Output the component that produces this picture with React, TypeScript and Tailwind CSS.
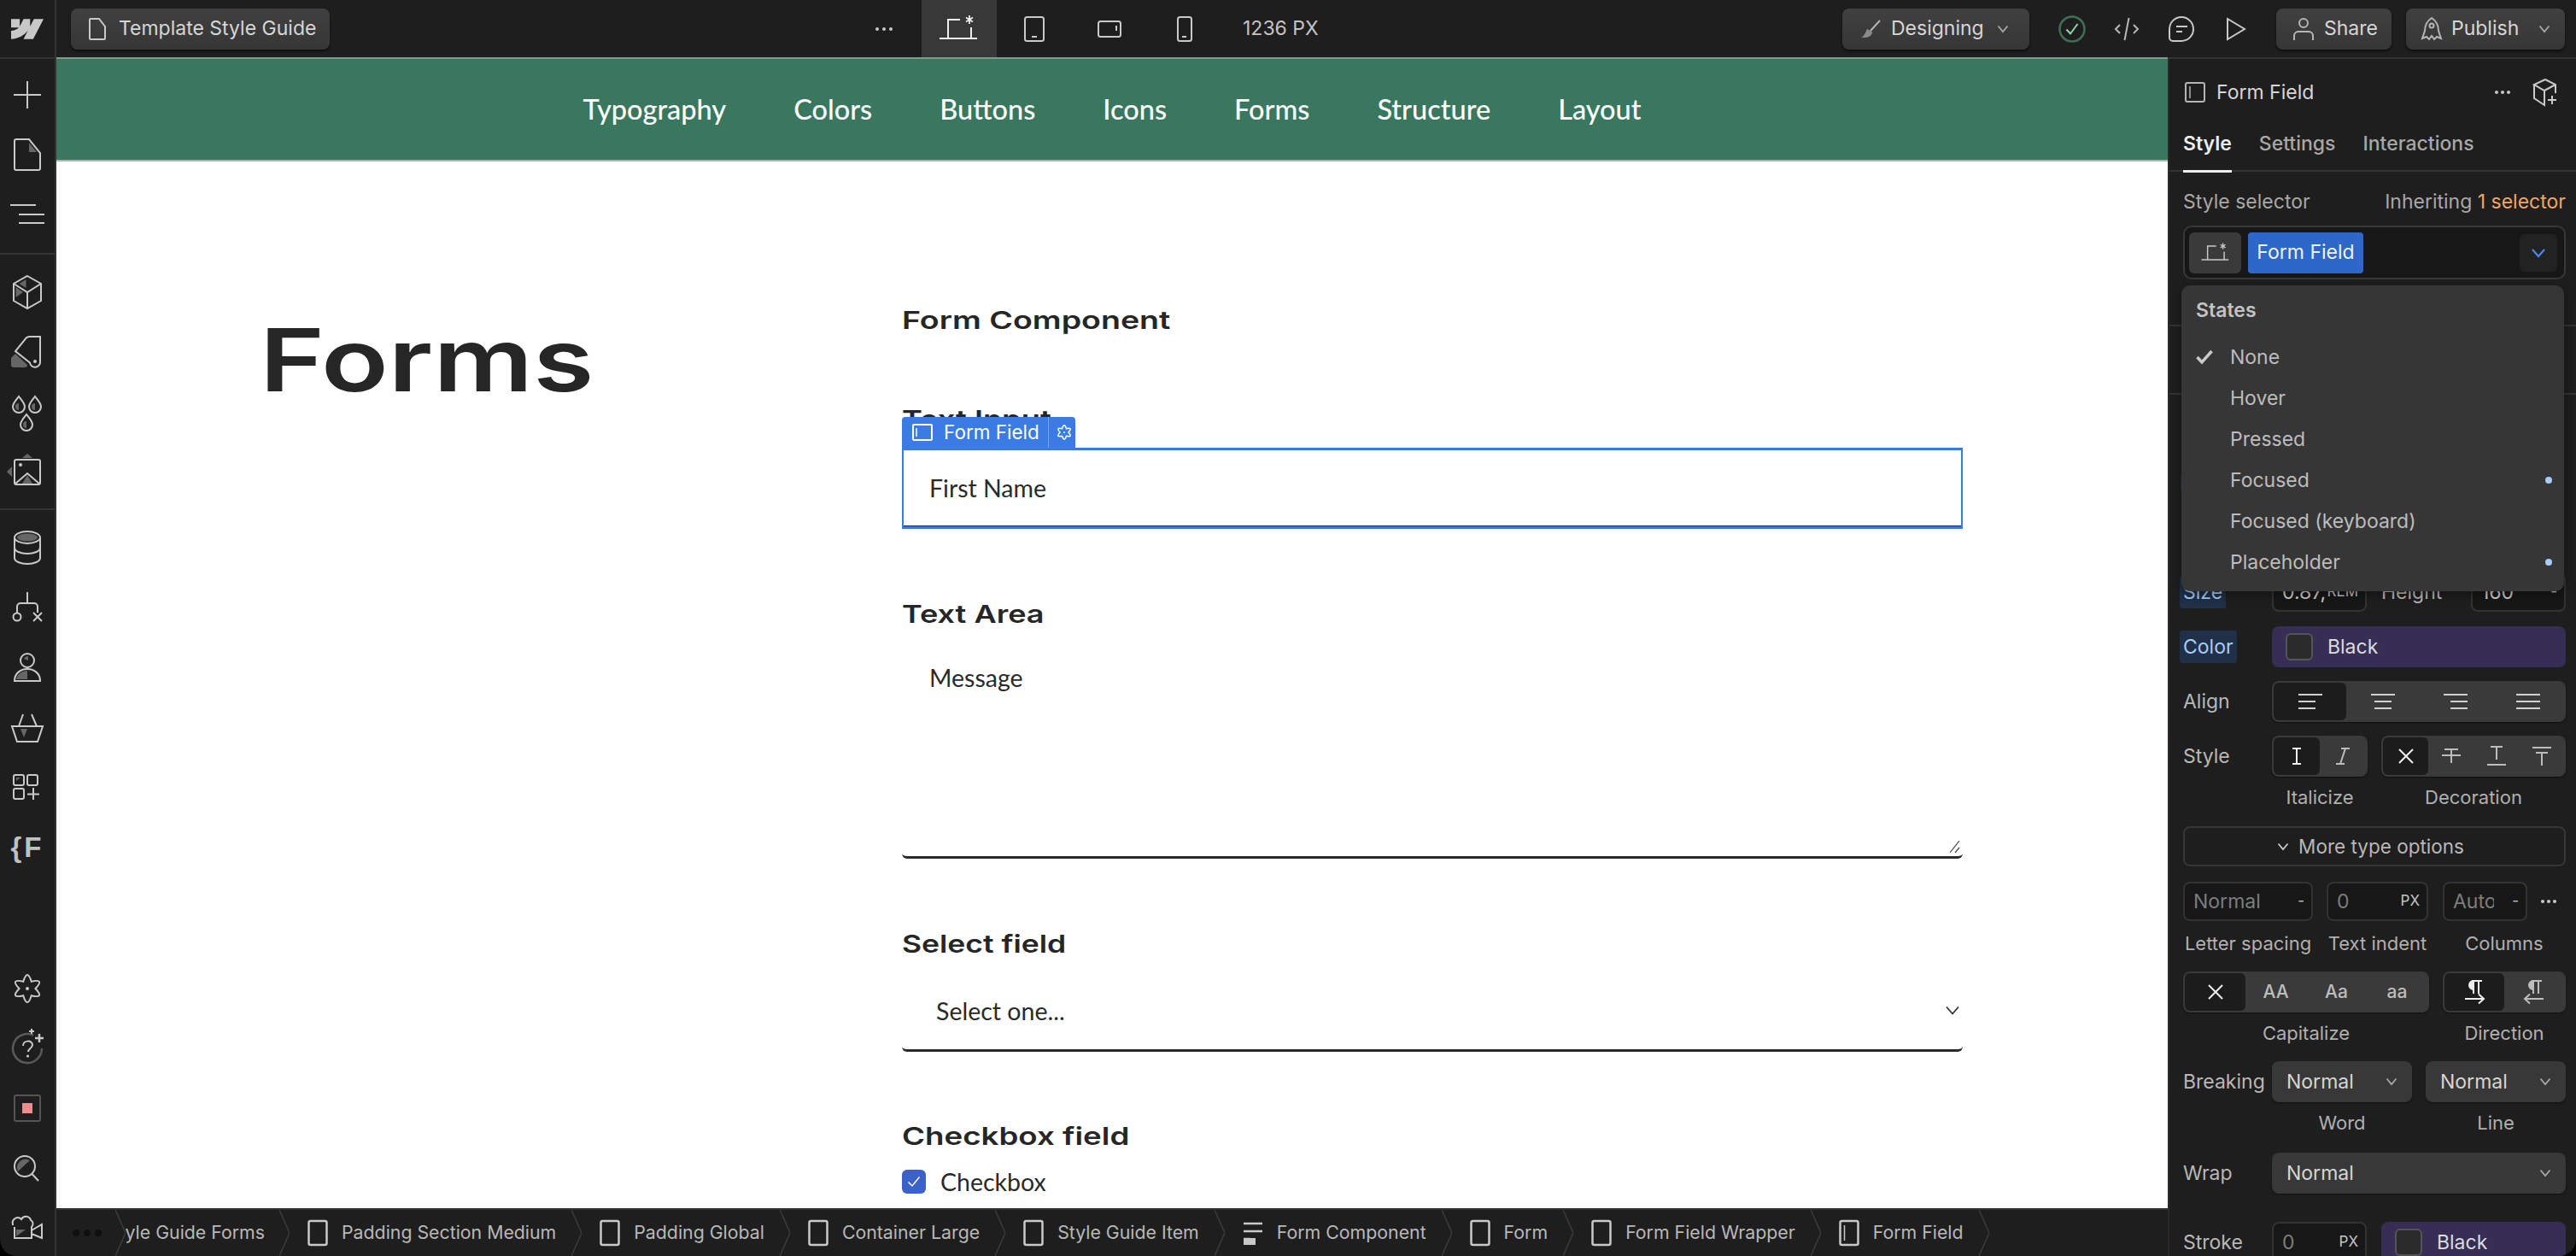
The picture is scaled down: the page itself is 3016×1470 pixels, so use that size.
import React from 'react';

const C = '#c9c9c9';
const A = '#666666';

function flower(c: number, R: number, r: number) {
  const pt = (deg: number, rad: number) => {
    const a = (deg * Math.PI) / 180;
    return `${(c + rad * Math.cos(a)).toFixed(2)} ${(c + rad * Math.sin(a)).toFixed(2)}`;
  };
  let d = `M${pt(-60, r)}`;
  for (let i = 0; i < 6; i++) {
    const a = -30 + i * 60;
    d += ` Q${pt(a, R)} ${pt(a + 30, r)}`;
  }
  return d + 'Z';
}

const Icon: React.FC<{ s?: number; h?: number; vb?: string; w?: number; c?: string; children: React.ReactNode }> = ({ s = 40, h, vb, w = 2, c = C, children }) => (
  <svg width={s} height={h ?? s} viewBox={vb ?? `0 0 ${s} ${h ?? s}`} fill="none" stroke={c} strokeWidth={w} className="block shrink-0 overflow-visible">
    {children}
  </svg>
);

const Drop = ({ x, y }: { x: number; y: number }) => (
  <g transform={`translate(${x} ${y})`}>
    <path d="M0 -10C3 -6 7 -2 7 2a7 7 0 0 1-14 0C-7 -2 -3 -6 0 -10Z" />
    <path d="M0 -2a4 4 0 0 0 0 8Z" fill={A} stroke="none" />
  </g>
);

const BoxIcon = ({ kind = 'plain', c = C }: { kind?: 'plain' | 'field'; c?: string }) => (
  <Icon s={24} h={32} vb="0 0 24 32" w={2.5} c={c}>
    <rect x="1.5" y="2" width="21" height="28" rx="2" />
    {kind === 'field' && <path d="M6.5 7v18" strokeWidth="1.5" />}
  </Icon>
);

const railTop = [
  <Icon key="a"><path d="M20 4v32M4 20h32" /></Icon>,
  <Icon key="b">
    <path d="M7 2h15l13 16v18a2 2 0 0 1-2 2H7a2 2 0 0 1-2-2V4a2 2 0 0 1 2-2Z" />
    <path d="M22 6v11h9Z" fill={A} stroke="none" />
  </Icon>,
  <Icon key="c"><path d="M0 9h30M10 20h30M10 30h30" /></Icon>,
];

const railDesign = [
  <Icon key="a">
    <path d="M20 1l16 9v20l-16 9-16-9V10ZM4 10l16 10 16-10M20 20v19" />
    <path d="M18.500 5l-8 5 8 5ZM6.500 14v12l8.500-6Z" fill={A} stroke="none" />
  </Icon>,
  <Icon key="b">
    <path d="M22 2h13v29a6 6 0 0 1-12 1.500L6 19 19 3Z" />
    <circle cx="29" cy="31" r="2" fill={C} stroke="none" />
    <path d="M1 35v-8l5-5 14 13a3 3 0 0 1-3 3H4a3 3 0 0 1-3-3Z" fill={A} stroke="none" />
  </Icon>,
  <Icon key="c"><Drop x={10} y={12} /><Drop x={29} y={12} /><Drop x={19} y={33} /></Icon>,
  <Icon key="d">
    <rect x="5" y="6" width="30" height="29" rx="2" />
    <path d="M6 34l14-12 14 12" />
    <circle cx="12" cy="12" r="2" fill={C} stroke="none" />
    <path d="M14 4l6-5 6 5ZM2 14l-6 6 6 6ZM20 24l-6 10h12Z" fill={A} stroke="none" />
  </Icon>,
];

const railCms = [
  <Icon key="a">
    <ellipse cx="20" cy="8" rx="15" ry="7" />
    <path d="M5 8v24c0 4 7 7 15 7s15-3 15-7V8M5 20c0 4 7 7 15 7s15-3 15-7" />
    <ellipse cx="20" cy="8" rx="12" ry="4.500" fill={A} stroke="none" />
  </Icon>,
  <Icon key="b">
    <path d="M20 2v13M8 26v-7a4 4 0 0 1 4-4h16a4 4 0 0 1 4 4v7" />
    <circle cx="8" cy="31" r="4.500" />
    <path d="M27 26l10 10M37 26L27 36" />
  </Icon>,
  <Icon key="c">
    <circle cx="20" cy="12" r="8" />
    <path d="M5 36c0-9 7-14 15-14s15 5 15 14Z" />
    <path d="M7 34c1-6 7-10 13-10v10ZM16 10c1-2 3-3 5-3v5Z" fill={A} stroke="none" />
  </Icon>,
  <Icon key="d">
    <path d="M2 19h36l-6 18H8ZM15 5l-5 14M25 5l6 14" />
    <path d="M12 22h8l-4 10Z" fill={A} stroke="none" />
  </Icon>,
  <Icon key="e">
    <rect x="4" y="6" width="12" height="12" rx="2" />
    <rect x="20" y="6" width="12" height="12" rx="2" />
    <rect x="4" y="22" width="12" height="12" rx="2" />
    <path d="M20 28.500h14M27 21v14" />
    <path d="M7 9h5l-5 4Z" fill={A} stroke="none" />
  </Icon>,
  <span key="f" className="font-['Liberation_Sans',sans-serif] font-bold text-[33px] leading-none text-[#c0c0c0] tracking-[3px]">{'{F'}</span>,
];

const railBottom = [
  <Icon key="a">
    <path d={flower(20, 24, 9.500)} />
    <circle cx="20" cy="20" r="2" fill={C} stroke="none" />
  </Icon>,
  <div key="b" className="relative">
    <Icon>
      <path d="M27 4.500A17 17 0 1 0 37 20" stroke="#5a5a5a" strokeWidth="2.500" />
      <path d="M34 3v10M29 8h10" strokeWidth="2.500" />
      <path d="M25 -3v6M22 0h6" strokeWidth="2" />
      <path d="M15 17c0-7 11-7 11-1 0 4-5 4-5 8" />
      <circle cx="20.500" cy="29" r="1.600" fill={C} stroke="none" />
    </Icon>
  </div>,
  <div key="c" className="w-[32px] h-[32px] border-[2.500px] border-[#555] rounded-[3px] flex items-center justify-center">
    <div className="w-[12px] h-[12px] bg-[#f28b8b]" />
  </div>,
  <Icon key="d">
    <circle cx="17" cy="18" r="12" />
    <path d="M25.500 27L33 35" />
    <path d="M9 24a10 10 0 0 1 14-13Z" fill={A} stroke="none" />
  </Icon>,
  <Icon key="e">
    <path d="M3 17a6 6 0 0 1 0-1 6 6 0 0 1 10-6 6 6 0 0 1 11 1 5 5 0 0 1 1 8h0v13H5V19M25 23l12-7v16l-12-5" />
    <path d="M7 30V22h11Z" fill={A} stroke="none" />
  </Icon>,
];

const RailRow: React.FC<{ children: React.ReactNode }> = ({ children }) => (
  <div className="h-[70px] flex items-center justify-center">{children}</div>
);

const Rail = () => (
  <div className="w-[66px] shrink-0 flex flex-col border-r-2 border-t-2 border-[#333333]">
    <div className="pt-[7px] pb-[10px] border-b-2 border-[#333333]">{railTop.map((x, i) => <RailRow key={i}>{x}</RailRow>)}</div>
    <div className="pt-[9px] pb-[8px] border-b-2 border-[#333333]">{railDesign.map((x, i) => <RailRow key={i}>{x}</RailRow>)}</div>
    <div className="pt-[9px]">{railCms.map((x, i) => <RailRow key={i}>{x}</RailRow>)}</div>
    <div className="mt-auto -mb-[2px]">{railBottom.map((x, i) => <RailRow key={i}>{x}</RailRow>)}</div>
  </div>
);

const TopBtn: React.FC<{ className: string; children: React.ReactNode }> = ({ className, children }) => (
  <div className={`h-[48px] rounded-[8px] bg-linear-to-b from-[#404040] to-[#363636] shadow-[0_2px_3px_rgba(0,0,0,0.6)] flex items-center text-[#d6d6d6] ${className}`}>
    {children}
  </div>
);

const SmallChevron = ({ c = '#a8a8a8' }: { c?: string }) => (
  <Icon s={14} h={10} c={c} w={1.800}><path d="M1.500 1.500L7 8l5.500-6.500" /></Icon>
);

const LaptopIcon = ({ c = C }: { c?: string }) => (
  <Icon s={46} h={32} c={c}>
    <path d="M0 27h44M10 27V5h14M37 14v13" />
    <path d="M35 0v10M31 2.500l8 5M39 2.500l-8 5" strokeWidth="1.800" />
  </Icon>
);

const TopBar = () => (
  <div className="h-[67px] shrink-0 flex items-center">
    <div className="w-[991px] h-full flex items-center shrink-0">
      <div className="w-[66px] h-full border-r-2 border-[#333333] flex items-center justify-center">
        <svg width="38" height="38" viewBox="0 0 24 24" fill="#c8c8c8" className="block"><path d="M24 4.515l-7.658 14.97H9.149l3.205-6.204h-.144C9.566 16.713 5.621 18.973 0 19.485v-6.118s3.596-.213 5.71-2.435H0V4.515h6.417v5.278l.144-.001 2.622-5.277h4.854v5.244h.144l2.72-5.244H24z" /></svg>
      </div>
      <TopBtn className="ml-[17px] w-[303px] pl-[21px] gap-[15px]">
        <Icon s={20} h={26}><path d="M2 1h10l7 9v14a1 1 0 0 1-1 1H2a1 1 0 0 1-1-1V2a1 1 0 0 1 1-1Z" /></Icon>
        Template Style Guide
      </TopBtn>
    </div>
    <div className="w-[88px] h-full flex items-center justify-center text-[#c9c9c9]">
      <Icon s={22} h={6} c="none" w={0}><circle cx="3" cy="3" r="2" fill={C} /><circle cx="11" cy="3" r="2" fill={C} /><circle cx="19" cy="3" r="2" fill={C} /></Icon>
    </div>
    <div className="w-[88px] h-full bg-[#383838] flex items-center justify-center"><LaptopIcon c="#eeeeee" /></div>
    <div className="w-[88px] h-full flex items-center justify-center">
      <Icon s={24} h={30}><rect x="1" y="1" width="22" height="28" rx="2.500" /><path d="M9 24h6" /></Icon>
    </div>
    <div className="w-[88px] h-full flex items-center justify-center">
      <Icon s={28} h={20}><rect x="1" y="1" width="26" height="18" rx="2.500" /><path d="M22 6v6" /></Icon>
    </div>
    <div className="w-[88px] h-full flex items-center justify-center">
      <Icon s={18} h={30}><rect x="1" y="1" width="16" height="28" rx="2.500" /><path d="M6 24h5" /></Icon>
    </div>
    <div className="ml-[24px] text-[#c4c4c4]">1236 PX</div>
    <div className="ml-auto mr-[13px] h-full flex items-center">
      <TopBtn className="w-[219px] pl-[21px]">
        <svg width="24" height="22" viewBox="0 0 24 22" className="block shrink-0 mr-[12px]">
          <path d="M23 1L12 13" stroke="#b5b5b5" strokeWidth="2" />
          <path d="M8 11l6 3c0 4-3 7-9 7H1c4-2 5-6 7-10Z" fill="#8a8a8a" />
        </svg>
        Designing
        <span className="ml-[15px]"><SmallChevron /></span>
      </TopBtn>
      <div className="ml-[18px] w-[64px] flex justify-center">
        <Icon s={32} c="#3f6f54" w={2.500}><circle cx="16" cy="16" r="14.500" /><path d="M9.500 16.500l4.500 5L22.500 10" stroke="#8ad8a4" strokeWidth="2" /></Icon>
      </div>
      <div className="w-[64px] flex justify-center">
        <Icon s={28} h={30} c="#b8b8b8"><path d="M6 10l-5 5 5 5M22 10l5 5-5 5M16.500 2l-5 26" /></Icon>
      </div>
      <div className="w-[64px] flex justify-center">
        <Icon s={30}><path d="M15 1a14 14 0 0 1 0 28H5a4 4 0 0 1-4-4V15A14 14 0 0 1 15 1Z" /><path d="M9 12h13M9 18h7" /></Icon>
      </div>
      <div className="w-[64px] flex justify-center">
        <Icon s={24} h={28}><path d="M2 2l20 12L2 26Z" /></Icon>
      </div>
      <TopBtn className="ml-[15px] w-[135px] pl-[20px] gap-[12px]">
        <Icon s={24} h={28} c="#b5b5b5"><circle cx="12" cy="7" r="5" /><path d="M1 27v-5a5 5 0 0 1 5-5h12a5 5 0 0 1 5 5v5" /></Icon>
        Share
      </TopBtn>
      <TopBtn className="ml-[17px] w-[186px] pl-[18px] gap-[11px]">
        <Icon s={24} h={28} c="#b5b5b5"><path d="M12 1c6 4 8 10 8 15l3 9-5-2-3 3-3-4-3 4-3-3-5 2 3-9c0-5 2-11 8-15Z" /><circle cx="12" cy="10" r="2.500" /></Icon>
        Publish
        <span className="ml-[12px]"><SmallChevron /></span>
      </TopBtn>
    </div>
  </div>
);

const heading = "font-['Inter',sans-serif] font-semibold text-[29px] leading-[36px] text-[#262626] origin-left";
const pageText = "font-['Lato',sans-serif] text-[#2a2a2a]";

const Canvas = () => (
  <div className="flex-1 min-h-0 bg-white overflow-hidden flex flex-col">
    <nav className="h-[122px] shrink-0 bg-[#39785f] border-t-2 border-t-[#7d9d90] border-b-2 border-b-[#a9b5af] flex items-center justify-center gap-[79px] font-['Lato',sans-serif] font-medium text-[32.500px] text-white">
      {['Typography', 'Colors', 'Buttons', 'Icons', 'Forms', 'Structure', 'Layout'].map((t) => <span key={t}>{t}</span>)}
    </nav>
    <div className="flex pl-[242px] pt-[168px]">
      <h1 className="w-[748px] -ml-[4px] mr-[4px] mt-[4px] font-['Inter',sans-serif] font-semibold text-[102px] leading-[120px] text-[#262626]">
        <span className="inline-block origin-left scale-x-[1.27]">Forms</span>
      </h1>
      <div className="w-[1242px]">
        <div className={`${heading} scale-x-[1.295]`}>Form Component</div>
        <div className={`${heading} scale-x-[1.25] mt-[80px]`}>Text Input</div>
        <div className={`${pageText} relative mt-[15px] h-[95px] border-2 border-[#3a7be0] border-t-[3px] border-b-[3px] pl-[30px] flex items-center text-[28.500px] text-[#2a2a2a] shadow-[inset_0_-1px_0_#1f2a3d]`}>
          First Name
          <div className="absolute left-[-2px] top-[-39px] h-[36px] w-[203px] bg-[#3b7ce4] rounded-t-[4px] flex items-center pl-[12px] text-white font-['Inter',sans-serif] text-[22.500px] whitespace-nowrap">
            <Icon s={24} h={20} c="#ffffff" w={2}><rect x="1" y="1" width="22" height="18" rx="1" /><path d="M5 5v10" strokeWidth="1.500" /></Icon>
            <span className="ml-[13px] shrink-0">Form Field</span>
            <div className="ml-[10px] w-[1px] h-full bg-[#79a6ee] shrink-0" />
            <span className="ml-[8px]"><Icon s={20} c="#ffffff" w={1.500}><path d={flower(10, 12, 5)} /><circle cx="10" cy="10" r="1" fill="#fff" stroke="none" /></Icon></span>
          </div>
        </div>
        <div className={`${heading} scale-x-[1.243] mt-[82px]`}>Text Area</div>
        <div className={`${pageText} relative mt-[13px] h-[255px] border-b-[3px] border-[#2a2a2a] rounded-b-[6px] pl-[32px] pt-[25px] text-[28.500px] leading-[36px]`}>
          Message
          <svg width="14" height="16" viewBox="0 0 14 16" fill="none" stroke="#444" strokeWidth="1.200" className="absolute right-[2px] bottom-[3px]"><path d="M1 15L12 1M7 15l5-6" /></svg>
        </div>
        <div className={`${heading} scale-x-[1.224] mt-[82px]`}>Select field</div>
        <div className={`${pageText} mt-[15px] h-[93px] border-b-[3px] border-[#2a2a2a] rounded-b-[6px] pl-[40px] pr-[3px] flex items-center justify-between text-[28.500px]`}>
          Select one...
          <Icon s={18} h={12} c="#333" w={1.800}><path d="M2 1.500l7 8 7-8" /></Icon>
        </div>
        <div className={`${heading} scale-x-[1.265] mt-[81px]`}>Checkbox field</div>
        <div className={`${pageText} mt-[17px] h-[36px] flex items-center text-[28.500px]`}>
          <div className="w-[28px] h-[28px] rounded-[6px] bg-[#3a62c8] flex items-center justify-center">
            <Icon s={16} h={14} c="#fff" w={1.500}><path d="M1.500 7.500l4.500 4.500 8.500-10.500" /></Icon>
          </div>
          <span className="ml-[17px]">Checkbox</span>
        </div>
      </div>
    </div>
  </div>
);

const Chev = () => (
  <svg width="12" height="54" viewBox="0 0 12 54" fill="none" stroke="#3c3c3c" strokeWidth="1.500" className="block shrink-0"><path d="M0 0l12 27L0 54" /></svg>
);

const crumbs: { t: string; kind?: 'nav' | 'field' }[] = [
  { t: 'Padding Section Medium' },
  { t: 'Padding Global' },
  { t: 'Container Large' },
  { t: 'Style Guide Item' },
  { t: 'Form Component', kind: 'nav' },
  { t: 'Form' },
  { t: 'Form Field Wrapper' },
  { t: 'Form Field', kind: 'field' },
];

const BottomBar = () => (
  <div className="h-[56px] shrink-0 border-t-2 border-[#333333] flex items-center text-[21.300px] text-[#b8b8b8] whitespace-nowrap overflow-hidden">
    <div className="w-[69px] flex justify-center gap-[5px] shrink-0 pl-[2px]">
      <div className="w-[8px] h-[8px] rounded-full bg-[#0f0f0f]" />
      <div className="w-[8px] h-[8px] rounded-full bg-[#0f0f0f]" />
      <div className="w-[8px] h-[8px] rounded-full bg-[#0f0f0f]" />
    </div>
    <Chev />
    <div className="w-[163px] overflow-hidden flex justify-end shrink-0"><span>Style Guide Forms</span></div>
    <div className="ml-[17px]"><Chev /></div>
    {crumbs.map((c) => (
      <div key={c.t} className="flex items-center shrink-0">
        <div className="ml-[21px]">
          {c.kind === 'nav' ? (
            <Icon s={24} h={32} vb="0 0 24 32" w={2.500}>
              <path d="M1 5h22M1 14h22M1 23h8" />
              <rect x="1" y="22" width="14" height="8" fill={C} stroke="none" />
            </Icon>
          ) : (
            <BoxIcon kind={c.kind === 'field' ? 'field' : 'plain'} />
          )}
        </div>
        <span className="ml-[16px] mr-[18px]">{c.t}</span>
        <Chev />
      </div>
    ))}
  </div>
);

const Seg: React.FC<{ className: string; items: React.ReactNode[] }> = ({ className, items }) => (
  <div className={`h-[48px] p-[2px] rounded-[8px] bg-[#3a3a3a] shadow-[0_1px_2px_rgba(0,0,0,0.5)] flex text-[#bdbdbd] shrink-0 ${className}`}>
    {items.map((x, i) => (
      <div key={i} className={`flex-1 flex items-center justify-center rounded-[6px] ${i === 0 ? 'bg-[#1c1c1c]' : ''}`}>{x}</div>
    ))}
  </div>
);

const Label: React.FC<{ className?: string; children: React.ReactNode }> = ({ className = '', children }) => (
  <div className={`h-[25px] leading-[25px] text-center text-[22px] text-[#b0b0b0] ${className}`}>{children}</div>
);

const DarkInput: React.FC<{ className: string; value: string; unit: string; valueClass?: string }> = ({ className, value, unit, valueClass = 'text-[#7d7d7d]' }) => (
  <div className={`h-full flex items-center justify-between bg-[#171717] border-2 border-[#333333] rounded-[8px] pl-[10px] pr-[6px] shrink-0 ${className}`}>
    <span className={`overflow-hidden whitespace-nowrap ${valueClass}`}>{value}</span>
    <span className="text-[#c4c4c4] text-[17px] pr-[2px]">{unit}</span>
  </div>
);

const SelectBox: React.FC<{ className: string }> = ({ className }) => (
  <div className={`h-[48px] rounded-[8px] bg-[#383838] shadow-[0_1px_2px_rgba(0,0,0,0.5)] flex items-center justify-between pl-[17px] pr-[17px] text-[#d6d6d6] shrink-0 ${className}`}>
    Normal
    <SmallChevron />
  </div>
);

const ColorField: React.FC<{ className: string }> = ({ className }) => (
  <div className={`h-[48px] rounded-[8px] bg-[#362e54] flex items-center pl-[16px] text-[#dcdcdc] shrink-0 ${className}`}>
    <div className="w-[32px] h-[32px] rounded-[6px] bg-[#2b2b2b] border-2 border-[#555555]" />
    <span className="ml-[17px]">Black</span>
  </div>
);

const RowLabel: React.FC<{ children: React.ReactNode; className?: string }> = ({ children, className = '' }) => (
  <div className={`w-[104px] shrink-0 ${className}`}>{children}</div>
);

const Lines = ({ a, b, c }: { a: string; b: string; c: string }) => (
  <Icon s={28} h={20} c="#d0d0d0" w={2}><path d={`${a} ${b} ${c}`} /></Icon>
);

const Pilcrow = ({ dir }: { dir: 'r' | 'l' }) => (
  <Icon s={28} h={28} c={dir === 'r' ? '#eeeeee' : '#bdbdbd'} w={2}>
    <path d="M11 1h12M13 1v15M19 1v15" />
    <path d="M13 1a5 5 0 0 0 0 10Z" fill={dir === 'r' ? '#eeeeee' : '#bdbdbd'} />
    {dir === 'r' ? <path d="M3 22h22M19 16.500l6 5.500-6 5.500" /> : <path d="M25 22H3M9 16.500L3 22l6 5.500" />}
  </Icon>
);

const states = ['None', 'Hover', 'Pressed', 'Focused', 'Focused (keyboard)', 'Placeholder'];

const Panel = () => (
  <div className="relative w-[478px] shrink-0 border-l-2 border-t-2 border-l-[#2a2a2a] border-t-[#333333] text-[23px] text-[#b8b8b8] overflow-hidden">
    <div className="h-[40px] mt-[19px] pl-[16px] pr-[12px] flex items-center">
      <span className="ml-[2px]"><Icon s={24} h={24} c="#b5b5b5"><rect x="1" y="1" width="22" height="22" rx="2" /><path d="M6 5v14" strokeWidth="1.500" /></Icon></span>
      <span className="ml-[13px] text-[#d6d6d6]">Form Field</span>
      <span className="ml-auto"><Icon s={20} h={6} c="none" w={0}><circle cx="3" cy="3" r="2" fill={C} /><circle cx="10" cy="3" r="2" fill={C} /><circle cx="17" cy="3" r="2" fill={C} /></Icon></span>
      <span className="ml-[26px] mr-[10px]"><Icon s={28} h={32} w={2}><path d="M14 1l12 6v10M26 7L13 14 1 7l13-6M1 7v16l12 8V14M22 20v10M17 25h10" /></Icon></span>
    </div>
    <div className="h-[73px] border-b-2 border-[#333333] px-[16px] flex gap-[32px]">
      <div className="h-[74px] pt-[23px] border-b-[3px] border-[#eeeeee] text-[#ededed] font-semibold">Style</div>
      <div className="pt-[23px] font-medium text-[#a8a8a8]">Settings</div>
      <div className="pt-[23px] font-medium text-[#a8a8a8]">Interactions</div>
    </div>
    <div className="pl-[16px] pr-[12px]">
      <div className="mt-[21px] h-[28px] flex items-center justify-between text-[#a8a8a8]">
        <span>Style selector</span>
        <span>Inheriting <span className="text-[#efa767]">1 selector</span></span>
      </div>
      <div className="mt-[14px] h-[63px] rounded-[10px] border-2 border-[#383838] bg-[#171717] flex items-center pl-[5px] pr-[8px]">
        <div className="w-[61px] h-[48px] rounded-[6px] bg-[#3a3a3a] flex items-center justify-center"><span className="block scale-[0.72]"><LaptopIcon /></span></div>
        <div className="ml-[8px] h-[48px] w-[135px] rounded-[4px] bg-[#2d67c7] flex items-center justify-center text-[#f2f2f2]">Form Field</div>
        <div className="ml-auto w-[44px] h-[44px] rounded-[6px] bg-[#222222] flex items-center justify-center">
          <Icon s={18} h={12} c="#4a86e8" w={2.200}><path d="M2 2l7 8 7-8" /></Icon>
        </div>
      </div>
    </div>
    <div className="h-[55px] border-b-2 border-[#333333]" />
    <div className="h-[80px] border-b-2 border-[#333333]" />
    <div className="pl-[16px] pr-[12px] pt-[79px] flex flex-col">
      <div className="h-[48px] flex items-center mb-[16px]">
        <RowLabel className="-ml-[4px] text-[#e0a070]">Font</RowLabel>
      </div>
      <div className="h-[48px] flex items-center mb-[16px]"><RowLabel>Weight</RowLabel></div>
      <div className="h-[48px] flex items-center">
        <div className="w-[104px] shrink-0"><span className="-ml-[4px] px-[4px] py-[5px] rounded-[3px] bg-[#1f3048] text-[#a9cdfb]">Size</span></div>
        <div className="h-[46px] w-[111px]"><DarkInput className="w-full" value="0.87," unit="REM" valueClass="text-[#d0d0d0]" /></div>
        <span className="ml-[17px] w-[105px]">Height</span>
        <div className="h-[46px] w-[111px]"><DarkInput className="w-full" value="160" unit="-" valueClass="text-[#d0d0d0]" /></div>
      </div>
      <div className="mt-[16px] h-[48px] flex items-center">
        <div className="w-[104px] shrink-0"><span className="-ml-[4px] px-[4px] py-[5px] rounded-[3px] bg-[#1f3048] text-[#a9cdfb]">Color</span></div>
        <ColorField className="w-[344px]" />
      </div>
      <div className="mt-[16px] h-[48px] flex items-center">
        <RowLabel>Align</RowLabel>
        <Seg className="w-[344px]" items={[
          <Lines key="a" a="M0 2h28" b="M0 10h20" c="M0 18h20" />,
          <Lines key="b" a="M0 2h28" b="M4 10h20" c="M4 18h20" />,
          <Lines key="c" a="M0 2h28" b="M8 10h20" c="M8 18h20" />,
          <Lines key="d" a="M0 2h28" b="M0 10h28" c="M0 18h28" />,
        ]} />
      </div>
      <div className="mt-[16px] h-[48px] flex items-center">
        <RowLabel>Style</RowLabel>
        <Seg className="w-[112px]" items={[
          <Icon key="a" s={14} h={20} c="#eeeeee"><path d="M2 1h10M2 19h10M7 1v18" /></Icon>,
          <Icon key="b" s={16} h={20} c="#bdbdbd"><path d="M6 1h10M0 19h10M11 1L5 19" /></Icon>,
        ]} />
        <Seg className="ml-[16px] w-[216px]" items={[
          <Icon key="a" s={18} c="#eeeeee"><path d="M1 1l16 16M17 1L1 17" /></Icon>,
          <Icon key="b" s={22} h={18} c="#bdbdbd"><path d="M0 8h22M3 1h16M11 1v16" /></Icon>,
          <Icon key="c" s={22} h={24} c="#bdbdbd"><path d="M4 1h14M11 1v15M0 22h22" /></Icon>,
          <Icon key="d" s={22} h={24} c="#bdbdbd"><path d="M0 2h22M4 8h14M11 8v15" /></Icon>,
        ]} />
      </div>
      <div className="mt-[12px] flex">
        <Label className="ml-[104px] w-[112px]">Italicize</Label>
        <Label className="ml-[16px] w-[216px]">Decoration</Label>
      </div>
      <div className="mt-[21px] h-[47px] rounded-[8px] border-2 border-[#363636] flex items-center justify-center pr-[9px] text-[#b8b8b8]">
        <Icon s={14} h={10} c="#c9c9c9" w={1.800}><path d="M1.500 1.500L7 8l5.500-6.500" /></Icon>
        <span className="ml-[11px] text-[22.500px]">More type options</span>
      </div>
      <div className="mt-[18px] h-[46px] flex items-center">
        <DarkInput className="w-[152px]" value="Normal" unit="-" />
        <DarkInput className="ml-[16px] w-[119px]" value="0" unit="PX" />
        <DarkInput className="ml-[17px] w-[99px]" value="Auto" unit="-" valueClass="text-[#7d7d7d] w-[48px]" />
        <span className="ml-[15px]"><Icon s={20} h={6} c="none" w={0}><circle cx="3" cy="3" r="2" fill={C} /><circle cx="10" cy="3" r="2" fill={C} /><circle cx="17" cy="3" r="2" fill={C} /></Icon></span>
      </div>
      <div className="mt-[14px] flex">
        <Label className="w-[152px]">Letter spacing</Label>
        <Label className="ml-[16px] w-[119px]">Text indent</Label>
        <Label className="ml-[17px] w-[144px]">Columns</Label>
      </div>
      <div className="mt-[20px] h-[48px] flex items-center">
        <Seg className="w-[288px] text-[21px] font-medium" items={[
          <Icon key="a" s={18} c="#eeeeee"><path d="M1 1l16 16M17 1L1 17" /></Icon>,
          <span key="b">AA</span>,
          <span key="c">Aa</span>,
          <span key="d">aa</span>,
        ]} />
        <Seg className="ml-[16px] w-[144px]" items={[<Pilcrow key="a" dir="r" />, <Pilcrow key="b" dir="l" />]} />
      </div>
      <div className="mt-[12px] flex">
        <Label className="w-[288px]">Capitalize</Label>
        <Label className="ml-[16px] w-[144px]">Direction</Label>
      </div>
      <div className="mt-[20px] h-[48px] flex items-center">
        <RowLabel>Breaking</RowLabel>
        <SelectBox className="w-[164px]" />
        <SelectBox className="ml-[16px] w-[164px]" />
      </div>
      <div className="mt-[12px] flex">
        <Label className="ml-[104px] w-[164px]">Word</Label>
        <Label className="ml-[16px] w-[164px]">Line</Label>
      </div>
      <div className="mt-[22px] h-[48px] flex items-center">
        <RowLabel>Wrap</RowLabel>
        <SelectBox className="w-[344px]" />
      </div>
      <div className="mt-[33px] h-[48px] flex items-center">
        <RowLabel>Stroke</RowLabel>
        <DarkInput className="w-[111px]" value="0" unit="PX" />
        <ColorField className="ml-[17px] w-[216px]" />
      </div>
    </div>
    <div className="absolute left-[14px] top-[265px] w-[448px] h-[358px] rounded-[10px] bg-[#363636] shadow-[0_4px_12px_rgba(0,0,0,0.4)] px-[17px]">
      <div className="pt-[12px] h-[60px] font-semibold text-[#c4c4c4]">States</div>
      {states.map((s, i) => (
        <div key={s} className="h-[48px] flex items-center text-[#bdbdbd]">
          <div className="w-[40px] shrink-0">
            {i === 0 && <Icon s={20} h={18} c="#c9c9c9" w={3.500}><path d="M1.500 9l5.500 6L18.500 2" /></Icon>}
          </div>
          {s}
          {(s === 'Focused' || s === 'Placeholder') && <div className="ml-auto mr-[-3px] w-[8px] h-[8px] rounded-full bg-[#a9cdfb]" />}
        </div>
      ))}
    </div>
  </div>
);

const App: React.FC = () => (
  <div className="w-[3016px] h-[1470px] overflow-hidden bg-black">
    <div className="w-full h-full rounded-b-[20px] overflow-hidden bg-[#1e1e1e] flex flex-col font-['Inter',sans-serif] text-[23px] text-[#c4c4c4]">
      <TopBar />
      <div className="flex-1 min-h-0 flex">
        <Rail />
        <div className="flex-1 min-w-0 flex flex-col">
          <Canvas />
          <BottomBar />
        </div>
        <Panel />
      </div>
    </div>
  </div>
);

export default App;
